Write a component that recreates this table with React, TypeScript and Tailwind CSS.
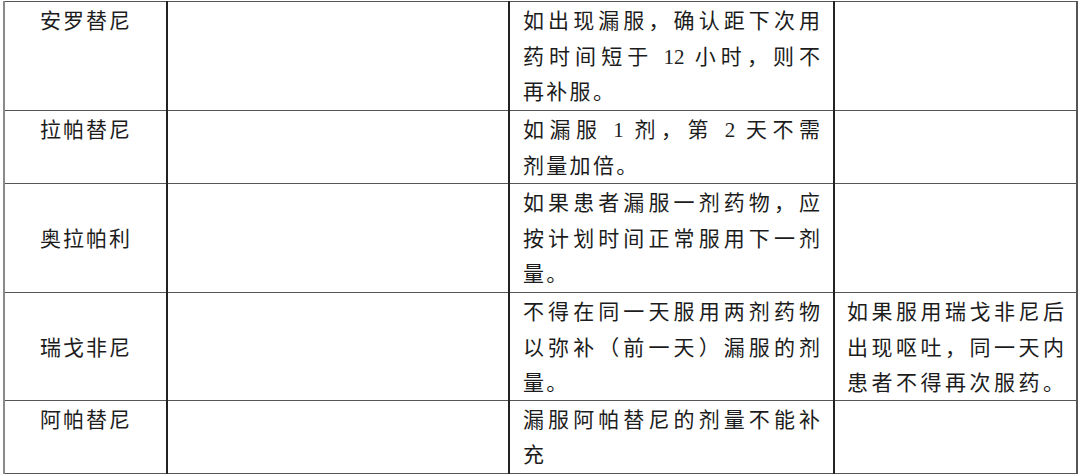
import React from "react";

const rows: {
  name: string;
  nameAlign: "top" | "middle";
  c3: string[];
  c3Full: number;
  c4: string[];
  c4Full: number;
  h: string;
}[] = [
  {
    name: "安罗替尼",
    nameAlign: "top",
    c3: ["如出现漏服，确认距下次用", "药时间短于 12 小时，则不", "再补服。"],
    c3Full: 2,
    c4: [],
    c4Full: 0,
    h: "h-[109px]",
  },
  {
    name: "拉帕替尼",
    nameAlign: "top",
    c3: ["如漏服 1 剂，第 2 天不需", "剂量加倍。"],
    c3Full: 1,
    c4: [],
    c4Full: 0,
    h: "h-[73px]",
  },
  {
    name: "奥拉帕利",
    nameAlign: "middle",
    c3: ["如果患者漏服一剂药物，应", "按计划时间正常服用下一剂", "量。"],
    c3Full: 2,
    c4: [],
    c4Full: 0,
    h: "h-[109px]",
  },
  {
    name: "瑞戈非尼",
    nameAlign: "middle",
    c3: ["不得在同一天服用两剂药物", "以弥补（前一天）漏服的剂", "量。"],
    c3Full: 2,
    c4: ["如果服用瑞戈非尼后", "出现呕吐，同一天内", "患者不得再次服药。"],
    c4Full: 3,
    h: "h-[107px]",
  },
  {
    name: "阿帕替尼",
    nameAlign: "top",
    c3: ["漏服阿帕替尼的剂量不能补", "充"],
    c3Full: 1,
    c4: [],
    c4Full: 0,
    h: "h-[73px]",
  },
];

function Lines({ lines, full }: { lines: string[]; full: number }) {
  return (
    <div className="relative top-[2px]">
      {lines.map((l, i) =>
        i < full ? (
          <div key={i} className="text-justify [text-align-last:justify] whitespace-pre">
            {l}
          </div>
        ) : (
          <div key={i} className="tracking-[2.3px] whitespace-pre">
            {l}
          </div>
        )
      )}
    </div>
  );
}

export default function App() {
  return (
    <div className="w-[1080px] h-[476px] bg-white overflow-hidden pt-px pl-[3px]">
      <table
        className="table-fixed border-collapse text-[21px] leading-[35.5px] text-[#1c1c1c]"
        style={{ fontFamily: '"Liberation Serif", "Noto Sans CJK SC", serif' }}
      >
        <colgroup>
          <col className="w-[163px]" />
          <col className="w-[342px]" />
          <col className="w-[325px]" />
          <col className="w-[243px]" />
        </colgroup>
        <tbody>
          {rows.map((r, i) => (
            <tr key={i} className={r.h}>
              <td
                className={`border-x-2 border-l-[#8a8a8a] border-r-[#222] border-y border-y-[#555] p-0 text-center tracking-[2px] ${
                  r.nameAlign === "top" ? "align-top" : "align-middle"
                }`}
              >
                <div className="relative top-[2px] pl-[1px]">{r.name}</div>
              </td>
              <td className="border-x-2 border-x-[#222] border-y border-y-[#555] p-0"></td>
              <td className="border-x-2 border-x-[#222] border-y border-y-[#555] px-[13px] py-0 align-top">
                <Lines lines={r.c3} full={r.c3Full} />
              </td>
              <td className="border-x-2 border-l-[#222] border-r-[#555] border-y border-y-[#555] pl-[12px] pr-[12px] py-0 align-top">
                <Lines lines={r.c4} full={r.c4Full} />
              </td>
            </tr>
          ))}
        </tbody>
      </table>
    </div>
  );
}
